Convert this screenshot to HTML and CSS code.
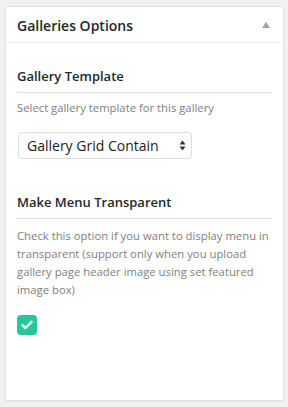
FILE: index.html
```
<!DOCTYPE html>
<html lang="en">

<head>
    <meta charset="UTF-8">
    <meta name="viewport" content="width=device-width, initial-scale=1.0">
    <title>Galleries Options</title>
    <link rel="stylesheet" href="styles.css">
</head>

<body>
    <div class="postbox">
        <div class="postbox-header">
            <h2>Galleries Options</h2>
            <span class="toggle-arrow"></span>
        </div>
        <div class="inside">
            <div class="option">
                <h3>Gallery Template</h3>
                <p class="desc">Select gallery template for this gallery</p>
                <div class="select-box">
                    <span>Gallery Grid Contain</span>
                    <svg class="select-arrows" width="7" height="11" viewBox="0 0 7 11">
                        <path d="M3.5 0.5 L6.5 4.5 L0.5 4.5 Z" fill="#333" />
                        <path d="M3.5 10.5 L6.5 6.5 L0.5 6.5 Z" fill="#333" />
                    </svg>
                </div>
            </div>

            <div class="option option-checkbox">
                <h3>Make Menu Transparent</h3>
                <p class="desc">Check this option if you want to display menu in transparent (support only when you upload gallery page header image using set featured image box)</p>
                <span class="checkbox">
                    <svg width="12" height="10" viewBox="0 0 12 10">
                        <path d="M1.5 5.2 L4.5 8 L10.5 1.8" fill="none" stroke="#fff" stroke-width="2.4" stroke-linecap="round" stroke-linejoin="round" />
                    </svg>
                </span>
            </div>
        </div>
    </div>
</body>

</html>
```

FILE: styles.css
```
body {
    margin: 0;
    padding: 6px 4px 6px 5px;
    background-color: #f1f1f1;
    font-family: 'Open Sans', sans-serif;
    color: #23282d;
}

.postbox {
    height: 395px;
    box-sizing: border-box;
    background-color: #fff;
    border: 1px solid #e5e5e5;
    box-shadow: 0 1px 1px rgba(0, 0, 0, 0.04);
}

.postbox-header {
    display: flex;
    align-items: center;
    justify-content: space-between;
    height: 35px;
    padding: 0 12px 0 11px;
    border-bottom: 1px solid #eee;
}

.postbox-header h2 {
    margin: 0;
    padding-top: 1px;
    font-size: 14px;
    font-weight: 600;
}

.toggle-arrow {
    width: 0;
    height: 0;
    margin-right: 1px;
    border-left: 4px solid transparent;
    border-right: 4px solid transparent;
    border-bottom: 6px solid #a0a5aa;
}

.inside {
    padding: 23px 11px 0;
}

.option {
    margin-bottom: 33px;
}

.option h3 {
    margin: 0;
    padding-bottom: 6px;
    font-size: 13px;
    font-weight: 600;
    line-height: 20px;
    border-bottom: 1px solid #ddd;
}

.desc {
    margin: 6px 0 15px;
    font-size: 11.3px;
    line-height: 18px;
    color: #808080;
}

.option-checkbox .desc {
    margin: 8px 0 16px;
}

.select-box {
    display: flex;
    align-items: center;
    justify-content: space-between;
    width: 174px;
    height: 27px;
    box-sizing: border-box;
    margin-left: 1px;
    padding: 0 5px 0 8px;
    border: 1px solid #ddd;
    border-radius: 4px;
    font-size: 14px;
    color: #222;
}

.checkbox {
    display: flex;
    align-items: center;
    justify-content: center;
    width: 20px;
    height: 20px;
    border-radius: 4px;
    background-color: #26c799;
}
```
